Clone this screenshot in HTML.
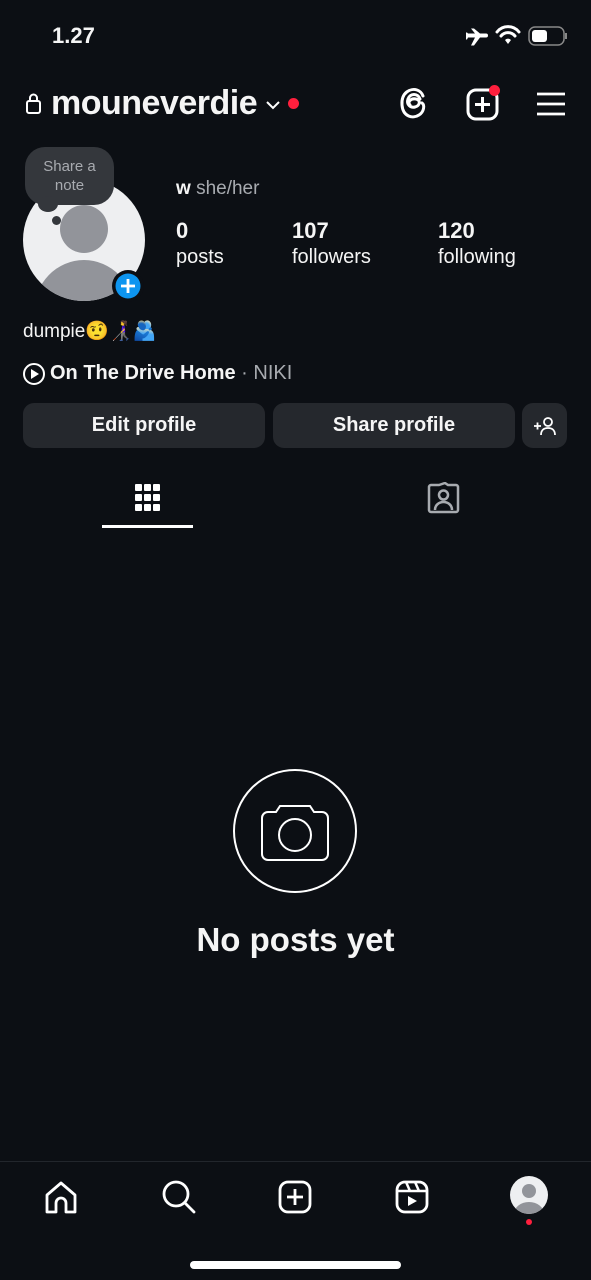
<!DOCTYPE html>
<html><head><meta charset="utf-8"><style>
*{margin:0;padding:0;box-sizing:border-box}
body{width:591px;height:1280px;background:#0c0f14;color:#f5f5f5;font-family:"Liberation Sans",sans-serif;position:relative;overflow:hidden}
.a{position:absolute}
.btn{position:absolute;top:403px;height:45px;background:#25282d;border-radius:11px;font-size:20px;font-weight:bold;display:flex;align-items:center;justify-content:center;color:#f5f5f5}
</style></head><body>
<div class="a" style="left:52px;top:23px;font-size:22px;font-weight:bold">1.27</div>
<svg class="a" style="left:465px;top:22px" width="105" height="28" viewBox="0 0 105 28">
<path d="M2 12.5h7l-4-5h3l6 5h6a2 2 0 0 1 0 4h-6l-6 8h-3l4-8H2l-1 2H0v-7h1z" fill="#fff" transform="translate(1,-1)"/>
<path d="M32 10a14 14 0 0 1 22 0M36 14a9 9 0 0 1 14 0" stroke="#fff" stroke-width="3" fill="none" stroke-linecap="round"/>
<path d="M40 18l3 4 3-4a4 4 0 0 0-6 0z" fill="#fff"/>
<rect x="64" y="5" width="35" height="18" rx="6" fill="none" stroke="#888" stroke-width="1.5"/>
<rect x="67" y="8" width="15" height="12" rx="3" fill="#fff"/>
<rect x="100" y="11" width="2" height="6" fill="#888"/>
</svg>
<svg class="a" style="left:25px;top:93px" width="17" height="22"><rect x="2" y="8" width="13" height="12" rx="2" fill="none" stroke="#fff" stroke-width="2"/><path d="M5 8V5a3.5 3.5 0 0 1 7 0v3" fill="none" stroke="#fff" stroke-width="2"/></svg>
<div class="a" style="left:51px;top:84px;font-size:34px;font-weight:bold;letter-spacing:-0.5px">mouneverdie</div>
<svg class="a" style="left:265px;top:99px" width="16" height="12"><path d="M2 3l6 6 6-6" stroke="#fff" stroke-width="2" fill="none"/></svg>
<div class="a" style="left:288px;top:98px;width:11px;height:11px;border-radius:50%;background:#ff1f3d"></div>
<svg class="a" style="left:397px;top:86px" width="34" height="36" viewBox="0 0 34 36"><path d="M23 13c-2-6-10-6-12 0-2 6 3 9 7 8 5-1 6-7 1-8-5-1-9 3-6 6M25 17c3 2 2 9-3 12-6 4-16 2-17-10C4 6 14 2 20 4c3 1 5 3 6 6" fill="none" stroke="#fff" stroke-width="3" stroke-linecap="round"/></svg>
<svg class="a" style="left:466px;top:87px" width="34" height="34"><rect x="2" y="3" width="29" height="29" rx="8" fill="none" stroke="#fff" stroke-width="3"/><path d="M16.5 10v15M9 17.5h15" stroke="#fff" stroke-width="3"/></svg>
<div class="a" style="left:489px;top:85px;width:11px;height:11px;border-radius:50%;background:#ff1f3d"></div>
<svg class="a" style="left:536px;top:92px" width="30" height="24"><path d="M1 2h28M1 12h28M1 22h28" stroke="#fff" stroke-width="2.8"/></svg>

<svg class="a" style="left:20px;top:176px" width="140" height="130">
<defs><clipPath id="c"><circle cx="64" cy="64" r="61"/></clipPath></defs>
<circle cx="64" cy="64" r="61" fill="#eeeff1"/>
<g clip-path="url(#c)"><circle cx="64" cy="53" r="24" fill="#92949a"/><ellipse cx="64" cy="136" rx="50" ry="52" fill="#92949a"/></g>
<circle cx="108" cy="110" r="16" fill="#0c0f14"/><circle cx="108" cy="110" r="12.5" fill="#0d95f0"/>
<path d="M108 103v14M101 110h14" stroke="#fff" stroke-width="2.8"/>
</svg>
<div class="a" style="left:25px;top:147px;width:89px;height:58px;border-radius:20px;background:#34373c;color:#a8abb0;font-size:15px;text-align:center;line-height:19px;padding-top:10px">Share a<br>note</div>
<div class="a" style="left:38px;top:196px;width:20px;height:16px;border-radius:50%;background:#34373c"></div>
<div class="a" style="left:52px;top:216px;width:9px;height:9px;border-radius:50%;background:#34373c"></div>

<div class="a" style="left:176px;top:178px;font-size:19px"><b>w</b> <span style="color:#a8abb0">she/her</span></div>
<div class="a" style="left:176px;top:218px;font-size:22px;font-weight:bold">0</div>
<div class="a" style="left:176px;top:246px;font-size:20px">posts</div>
<div class="a" style="left:292px;top:218px;font-size:22px;font-weight:bold">107</div>
<div class="a" style="left:292px;top:246px;font-size:20px">followers</div>
<div class="a" style="left:438px;top:218px;font-size:22px;font-weight:bold">120</div>
<div class="a" style="left:438px;top:246px;font-size:20px">following</div>

<div class="a" style="left:23px;top:319px;font-size:19px">dumpie🤨👩‍🦯🫂</div>
<svg class="a" style="left:22px;top:362px" width="24" height="24"><circle cx="12" cy="12" r="10" fill="none" stroke="#fff" stroke-width="2"/><path d="M9 7l8 5-8 5z" fill="#fff"/></svg>
<div class="a" style="left:50px;top:362px;font-size:20px"><b>On The Drive Home</b> <span style="color:#a8abb0">· NIKI</span></div>

<div class="btn" style="left:23px;width:242px">Edit profile</div>
<div class="btn" style="left:273px;width:242px">Share profile</div>
<div class="btn" style="left:522px;width:45px"><svg width="26" height="22"><path d="M2 11h7M5.5 7.5v7" stroke="#fff" stroke-width="1.8"/><circle cx="16" cy="7" r="4" fill="none" stroke="#fff" stroke-width="1.8"/><path d="M9 20c0-5 3-7 7-7s7 2 7 7" fill="none" stroke="#fff" stroke-width="1.8"/></svg></div>

<svg class="a" style="left:135px;top:484px" width="26" height="28"><g fill="#fff"><rect x="0" y="0" width="7" height="7" rx="1"/><rect x="9" y="0" width="7" height="7" rx="1"/><rect x="18" y="0" width="7" height="7" rx="1"/><rect x="0" y="10" width="7" height="7" rx="1"/><rect x="9" y="10" width="7" height="7" rx="1"/><rect x="18" y="10" width="7" height="7" rx="1"/><rect x="0" y="20" width="7" height="7" rx="1"/><rect x="9" y="20" width="7" height="7" rx="1"/><rect x="18" y="20" width="7" height="7" rx="1"/></g></svg>
<div class="a" style="left:102px;top:525px;width:91px;height:3px;background:#fff"></div>
<svg class="a" style="left:427px;top:482px" width="34" height="32"><path d="M12 3h-8a2 2 0 0 0-2 2v23a2 2 0 0 0 2 2h25a2 2 0 0 0 2-2V5a2 2 0 0 0-2-2h-8l-3-2z" fill="none" stroke="#a8abb0" stroke-width="2.5"/><circle cx="16.5" cy="13" r="4.5" fill="none" stroke="#a8abb0" stroke-width="2.5"/><path d="M8 28c0-5 4-8 8.5-8s8.5 3 8.5 8" fill="none" stroke="#a8abb0" stroke-width="2.5"/></svg>

<svg class="a" style="left:232px;top:768px" width="126" height="126"><circle cx="63" cy="63" r="61" fill="none" stroke="#fff" stroke-width="2"/><path d="M30 50a6 6 0 0 1 6-6h8l4-6h30l4 6h8a6 6 0 0 1 6 6v36a6 6 0 0 1-6 6H36a6 6 0 0 1-6-6z" fill="none" stroke="#fff" stroke-width="2" transform="translate(0,0)"/><circle cx="63" cy="67" r="16" fill="none" stroke="#fff" stroke-width="2"/></svg>
<div class="a" style="left:0;width:591px;top:921px;text-align:center;font-size:33px;font-weight:bold">No posts yet</div>

<div class="a" style="left:0;top:1161px;width:591px;height:1px;background:#22262c"></div>
<svg class="a" style="left:44px;top:1180px" width="34" height="34"><path d="M3 32V15L17 3l14 12v17h-9v-9a5 5 0 0 0-10 0v9z" fill="none" stroke="#fff" stroke-width="2.8" stroke-linejoin="round"/></svg>
<svg class="a" style="left:161px;top:1179px" width="36" height="36"><circle cx="15" cy="15" r="12" fill="none" stroke="#fff" stroke-width="2.8"/><path d="M24 24l9 9" stroke="#fff" stroke-width="2.8" stroke-linecap="round"/></svg>
<svg class="a" style="left:278px;top:1180px" width="34" height="34"><rect x="2" y="2" width="30" height="30" rx="8" fill="none" stroke="#fff" stroke-width="2.8"/><path d="M17 9v16M9 17h16" stroke="#fff" stroke-width="2.8"/></svg>
<svg class="a" style="left:395px;top:1180px" width="34" height="34"><rect x="2" y="2" width="30" height="30" rx="8" fill="none" stroke="#fff" stroke-width="2.8"/><path d="M2 11h30M11 2l4 9M20 2l4 9" stroke="#fff" stroke-width="2.5"/><path d="M13 16l9 5-9 5z" fill="#fff"/></svg>
<svg class="a" style="left:510px;top:1176px" width="38" height="38"><defs><clipPath id="d"><circle cx="19" cy="19" r="19"/></clipPath></defs><circle cx="19" cy="19" r="19" fill="#eeeff1"/><g clip-path="url(#d)"><circle cx="19" cy="15" r="7" fill="#92949a"/><ellipse cx="19" cy="38" rx="15" ry="12" fill="#92949a"/></g></svg>
<div class="a" style="left:526px;top:1219px;width:6px;height:6px;border-radius:50%;background:#ff1f3d"></div>
<div class="a" style="left:190px;top:1261px;width:211px;height:8px;border-radius:4px;background:#fff"></div>
</body></html>
